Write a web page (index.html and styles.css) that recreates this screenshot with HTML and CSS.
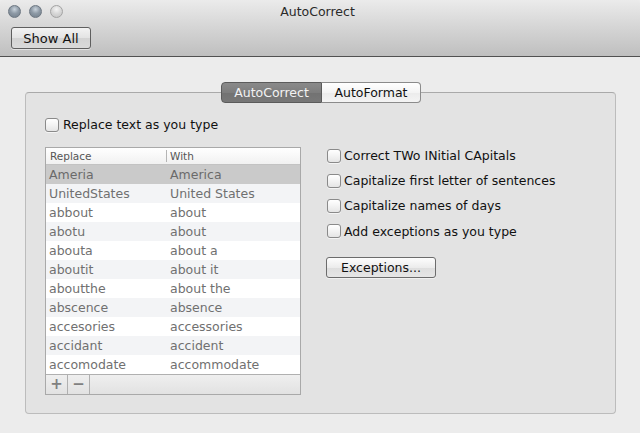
FILE: index.html
```html
<!DOCTYPE html>
<html>
<head>
<meta charset="utf-8">
<title>AutoCorrect</title>
<link rel="stylesheet" href="styles.css">
</head>
<body>
<div class="window">
  <header class="titlebar">
    <div class="title-row">
      <div class="lights">
        <span class="light"></span>
        <span class="light"></span>
        <span class="light off"></span>
      </div>
      <div class="title">AutoCorrect</div>
    </div>
    <div class="toolbar">
      <button class="btn show-all">Show All</button>
    </div>
  </header>
  <main class="content">
    <section class="group">
      <div class="tabs">
        <span class="tab active">AutoCorrect</span><span class="tab">AutoFormat</span>
      </div>
      <div class="group-body">
        <label class="check top-check"><span class="box"></span><span>Replace text as you type</span></label>
        <div class="columns">
          <div class="table">
            <div class="thead">
              <span class="th c1">Replace</span><span class="th c2">With</span>
            </div>
            <div class="tbody">
              <div class="row sel"><span class="c1">Ameria</span><span class="c2">America</span></div>
              <div class="row"><span class="c1">UnitedStates</span><span class="c2">United States</span></div>
              <div class="row"><span class="c1">abbout</span><span class="c2">about</span></div>
              <div class="row"><span class="c1">abotu</span><span class="c2">about</span></div>
              <div class="row"><span class="c1">abouta</span><span class="c2">about a</span></div>
              <div class="row"><span class="c1">aboutit</span><span class="c2">about it</span></div>
              <div class="row"><span class="c1">aboutthe</span><span class="c2">about the</span></div>
              <div class="row"><span class="c1">abscence</span><span class="c2">absence</span></div>
              <div class="row"><span class="c1">accesories</span><span class="c2">accessories</span></div>
              <div class="row"><span class="c1">accidant</span><span class="c2">accident</span></div>
              <div class="row"><span class="c1">accomodate</span><span class="c2">accommodate</span></div>
            </div>
            <div class="tfoot">
              <span class="tbtn">+</span><span class="tbtn">&minus;</span>
            </div>
          </div>
          <div class="options">
            <label class="check"><span class="box"></span><span>Correct TWo INitial CApitals</span></label>
            <label class="check"><span class="box"></span><span>Capitalize first letter of sentences</span></label>
            <label class="check"><span class="box"></span><span>Capitalize names of days</span></label>
            <label class="check"><span class="box"></span><span>Add exceptions as you type</span></label>
            <button class="btn exceptions">Exceptions...</button>
          </div>
        </div>
      </div>
    </section>
  </main>
</div>
</body>
</html>
```

FILE: styles.css
```css
* { box-sizing: border-box; }
html, body { margin: 0; padding: 0; }
body {
  width: 640px;
  height: 433px;
  overflow: hidden;
  background: #ececec;
  font-family: "DejaVu Sans", "Noto Sans", sans-serif;
  font-size: 12.5px;
  color: #111;
}
.window { width: 640px; height: 433px; background: #ececec; }

.titlebar {
  height: 57px;
  background: linear-gradient(#ebebeb, #d9d9d9 40%, #bfbfbf);
  border-bottom: 1px solid #515151;
  border-radius: 4px 4px 0 0;
}
.title-row {
  height: 23px;
  display: flex;
  align-items: center;
}
.lights {
  display: flex;
  gap: 8px;
  padding-left: 8px;
}
.light {
  width: 13px;
  height: 13px;
  border-radius: 50%;
  border: 1px solid #6d7782;
  background: radial-gradient(circle at 50% 30%, #c9d3dc 0, #8e9aa6 45%, #6f7c88 100%);
}
.light.off {
  border-color: #a3a3a3;
  background: radial-gradient(circle at 50% 30%, #f4f4f4 0, #d6d6d6 50%, #c3c3c3 100%);
}
.title {
  flex: 1;
  text-align: center;
  margin-left: -68px;
  font-size: 12.5px;
  color: #2a2a2a;
}
.toolbar {
  padding: 4px 0 0 11px;
}
.btn {
  font-family: inherit;
  font-size: 12.5px;
  color: #111;
  border: 1px solid #6c6c6c;
  border-radius: 3px;
  background: linear-gradient(#fdfdfd, #ececec 50%, #dedede 51%, #e6e6e6);
  padding: 0;
  box-shadow: 0 1px 0 rgba(255,255,255,0.5);
}
.show-all {
  width: 80px;
  height: 22px;
  font-size: 13px;
  border-color: #5f5f5f;
  background: linear-gradient(#f3f3f3, #e3e3e3 50%, #d3d3d3 51%, #dadada);
}

.content { padding: 35px 24px 0 25px; }
.group {
  height: 322px;
  border: 1px solid #bcbcbc;
  border-top-color: #a9a9a9;
  border-radius: 4px;
  background: #e3e3e3;
}
.tabs {
  display: flex;
  justify-content: center;
  margin-top: -11px;
  height: 21px;
  padding-left: 1px;
}
.tab {
  height: 21px;
  line-height: 19px;
  font-size: 12.5px;
  border: 1px solid #8b8b8b;
  background: linear-gradient(#ffffff, #f4f4f4 50%, #ebebeb 51%, #f4f4f4);
  color: #111;
  width: 99px;
  text-align: center;
}
.tab.active {
  width: 101px;
  border-color: #5b5b5b;
  border-radius: 4px 0 0 4px;
  background: linear-gradient(#8a8a8a, #7d7d7d 50%, #727272 51%, #777777);
  color: #f2f2f2;
}
.tab:last-child { border-left: none; border-radius: 0 4px 4px 0; }

.group-body { padding: 13px 0 0 19px; }
.check {
  display: flex;
  align-items: center;
  height: 16px;
  gap: 4px;
  color: #111;
}
.top-check { height: 17px; }
.box {
  width: 14px;
  height: 14px;
  flex: none;
  border: 1px solid #8a8a8a;
  border-radius: 3px;
  background: linear-gradient(#ffffff, #f3f3f3 50%, #e5e5e5);
  box-shadow: 0 1px 0 rgba(255,255,255,0.6);
}

.columns {
  display: flex;
  margin-top: 14px;
}
.table {
  width: 256px;
  border: 1px solid #a9a9a9;
  background: #fff;
}
.thead {
  display: flex;
  height: 17px;
  border-bottom: 1px solid #c3c3c3;
  background: linear-gradient(#ffffff, #f1f1f1);
  font-size: 10.5px;
  color: #555;
  align-items: center;
}
.th.c1 { width: 121px; padding-left: 4px; border-right: 1px solid #b5b5b5; height: 12px; line-height: 12px; }
.th.c2 { padding-left: 3px; line-height: 12px; }
.row {
  display: flex;
  height: 19px;
  align-items: center;
  color: #707070;
  font-size: 12.5px;
}
.row:nth-child(even) { background: #f3f4f6; }
.row.sel { background: #cacaca; color: #6a6a6a; }
.row .c1 { width: 121px; padding-left: 3px; }
.row .c2 { padding-left: 3px; }
.tfoot {
  display: flex;
  height: 20px;
  border-top: 1px solid #b0b0b0;
  background: linear-gradient(#efefef, #e2e2e2);
}
.tbtn {
  width: 22px;
  height: 19px;
  border-right: 1px solid #b0b0b0;
  text-align: center;
  line-height: 18px;
  font-size: 15px;
  font-weight: bold;
  color: #808080;
}

.options {
  margin-left: 26px;
  display: flex;
  flex-direction: column;
  gap: 9.2px;
  padding-top: 0.5px;
}
.options .check { gap: 3px; }
.exceptions {
  margin-top: 9px;
  margin-left: -1px;
  width: 110px;
  height: 21px;
}
```
